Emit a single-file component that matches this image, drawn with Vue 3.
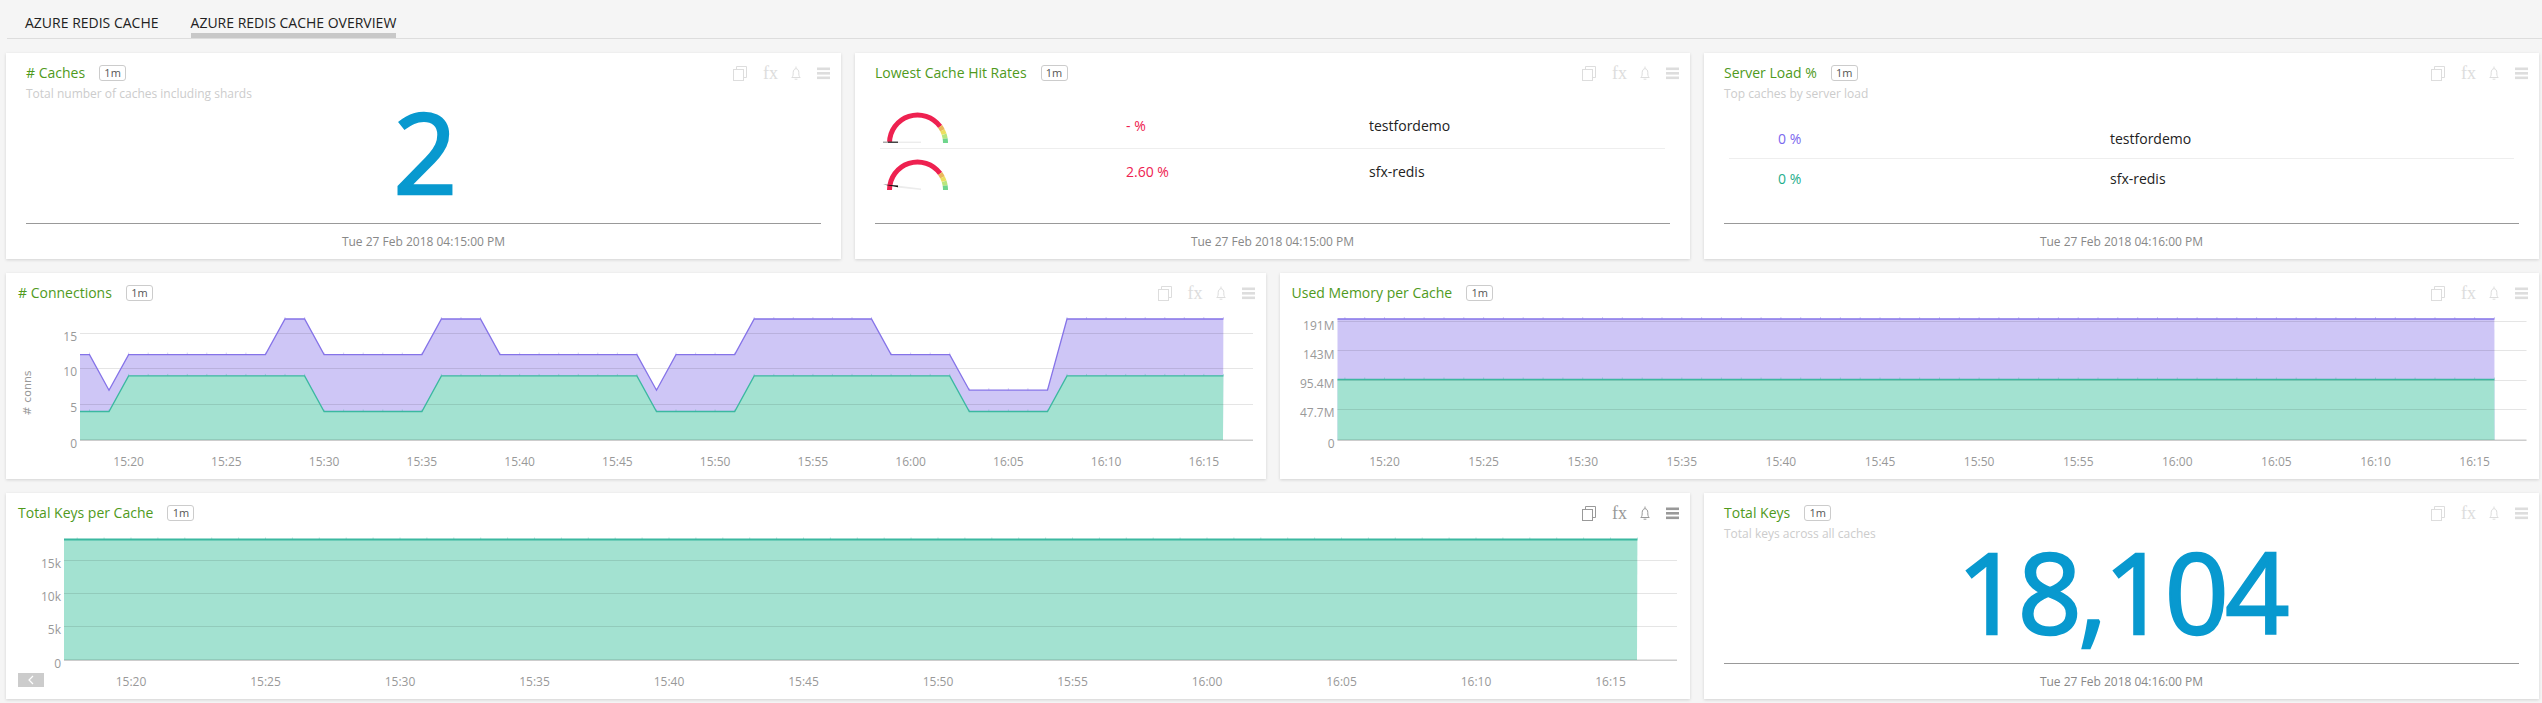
<template>
  <div class="page">
    <div class="tabs">
      <span class="tab">AZURE REDIS CACHE</span>
      <span class="tab active">AZURE REDIS CACHE OVERVIEW</span>
    </div>

    <div class="grid">
      <section v-for="card in cards" :key="card.title" :class="['card', card.cls]">
        <header class="head">
          <span class="title">{{ card.title }}</span>
          <span class="badge">1m</span>
          <div class="tools">
            <svg width="14" height="15" viewBox="0 0 14 15" fill="none" stroke="currentColor">
              <rect x="0.5" y="3.5" width="10" height="11" />
              <path d="M3.5 3V.5h10v11H11" />
            </svg>
            <span class="fx">fx</span>
            <svg width="10" height="15" viewBox="0 0 10 15" fill="none" stroke="currentColor">
              <path d="M.8 11.5c1.4-1.2 1.4-3 1.4-5 0-2.200 1.200-3.800 2.800-3.800s2.800 1.600 2.800 3.800c0 2 0 3.800 1.400 5z" />
              <path d="M5 .5v2M3.600 13.200h2.800" />
            </svg>
            <svg width="13" height="13" viewBox="0 0 13 13" fill="currentColor">
              <rect y="0.500" width="13" height="2.600" />
              <rect y="5" width="13" height="2.600" />
              <rect y="9.500" width="13" height="2.600" />
            </svg>
          </div>
        </header>
        <p v-if="card.sub" class="sub">{{ card.sub }}</p>

        <div v-if="card.type === 'stat'" class="stat">{{ card.value }}</div>

        <div v-if="card.type === 'gauges'" class="rows gauges">
          <div v-for="row in gaugeRows" :key="row.name" class="row">
            <svg class="gauge" width="66" height="36" viewBox="0 0 66 36" fill="none">
              <path v-for="seg in arcSegments" :key="seg.color" :d="seg.d" :stroke="seg.color" stroke-width="5" />
              <template v-if="row.flat">
                <rect x="15" y="34.600" width="23" height="1.400" fill="#ececec" />
                <rect x="0" y="34.500" width="5" height="1.800" fill="#aaa" />
                <rect x="5" y="34.500" width="10" height="1.800" fill="#444" />
              </template>
              <template v-else>
                <polygon points="14,31.500 38,34.500 38,36 14,33.500" fill="#ececec" />
                <polygon points="0,30.500 15,31.500 15,33.200" fill="#111" />
              </template>
            </svg>
            <span class="val red">{{ row.value }}</span>
            <span class="name">{{ row.name }}</span>
          </div>
        </div>

        <div v-if="card.type === 'load'" class="rows load">
          <div v-for="row in loadRows" :key="row.name" class="row">
            <span class="val" :style="{ color: row.color }">{{ row.value }}</span>
            <span class="name">{{ row.name }}</span>
          </div>
        </div>

        <div v-if="card.foot" class="foot">{{ card.foot }}</div>

        <svg v-if="card.chart" class="chart" height="166">
          <path
            v-for="s in card.chart.series"
            :key="s.fill"
            :d="s.area"
            :fill="s.fill"
          />
          <line
            v-for="g in card.chart.grid"
            :key="g.y"
            :x1="card.chart.left"
            :x2="card.chart.gridEnd"
            :y1="g.y"
            :y2="g.y"
            stroke="#000"
            stroke-opacity="0.1"
          />
          <line :x1="card.chart.left" :x2="card.chart.gridEnd" y1="127" y2="127" stroke="#000" stroke-opacity="0.1" stroke-width="2" />
          <g v-for="s in card.chart.series" :key="s.stroke" fill="none" :stroke="s.stroke">
            <path :d="s.line" :stroke-width="card.chart.lineWidth" />
            <path :d="s.ticks" stroke-opacity="0.35" />
          </g>
          <text
            v-for="g in card.chart.grid"
            :key="g.label"
            class="tick"
            text-anchor="end"
            :x="card.chart.labelEnd"
            :y="g.y + g.dy"
          >{{ g.label }}</text>
          <text
            v-for="t in card.chart.times"
            :key="t.label"
            class="tick"
            text-anchor="middle"
            :x="t.x"
            y="152.500"
          >{{ t.label }}</text>
          <text v-if="card.chart.yTitle" class="ytitle" text-anchor="middle" transform="translate(25 80) rotate(-90)">{{ card.chart.yTitle }}</text>
          <g v-if="card.chart.back">
            <rect x="12" y="140" width="26" height="14" fill="#ccc" />
            <path d="M27 143l-4 4 4 4" fill="none" stroke="#fff" stroke-width="1.200" />
          </g>
        </svg>
      </section>
    </div>
  </div>
</template>

<script setup>
const PURPLE = { fill: '#cec6f6', stroke: '#8573e8' }
const GREEN = { fill: '#a3e2d1', stroke: '#3bb8a0' }

// draws one chart out of [minute, value] breakpoints, minutes counted from 15:00
function buildChart(opts) {
  const x = (m) => opts.t20 + (m - 20) * opts.step
  const y = (v) => 127 - v * opts.unit
  const startMin = 20 + (opts.left - opts.t20) / opts.step
  const series = opts.series.map((s) => {
    const pts = s.points.map(([m, v]) => [m === 'start' ? startMin : m, v])
    const line = pts.map(([m, v], i) => `${i ? 'L' : 'M'}${x(m).toFixed(1)} ${y(v).toFixed(1)}`).join('')
    const area = `${line}L${opts.right} 127L${opts.left} 127Z`
    let ticks = ''
    for (let m = Math.ceil(startMin); m <= 76; m++) {
      const i = pts.findIndex((p) => p[0] >= m)
      if (i < 1) continue
      const [m0, v0] = pts[i - 1]
      const [m1, v1] = pts[i]
      const v = v0 + ((v1 - v0) * (m - m0)) / (m1 - m0)
      ticks += `M${x(m).toFixed(1)} ${(y(v) - 2).toFixed(1)}v2`
    }
    return { ...s.color, line, area, ticks }
  })
  const times = []
  for (let m = 20; m <= 75; m += 5) {
    const label = `${m >= 60 ? 16 : 15}:${String(m % 60).padStart(2, '0')}`
    times.push({ label, x: x(m) })
  }
  return { ...opts, series, times }
}

const connChart = buildChart({
  left: 74,
  right: 1217,
  gridEnd: 1247,
  labelEnd: 71,
  t20: 122.6,
  step: 19.55,
  unit: 7.12,
  lineWidth: 1.3,
  yTitle: '# conns',
  grid: [
    { y: 20.5, label: '15', dy: 7 },
    { y: 55.5, label: '10', dy: 7 },
    { y: 91.5, label: '5', dy: 7 },
    { y: 127.5, label: '0', dy: 7 }
  ],
  series: [
    {
      color: PURPLE,
      points: [['start', 12], [18, 12], [19, 7], [20, 12], [27, 12], [28, 17], [29, 17], [30, 12], [35, 12], [36, 17], [38, 17], [39, 12], [46, 12], [47, 7], [48, 12], [51, 12], [52, 17], [58, 17], [59, 12], [62, 12], [63, 7], [67, 7], [68, 17], [76, 17]]
    },
    {
      color: GREEN,
      points: [['start', 4], [19, 4], [20, 9], [29, 9], [30, 4], [35, 4], [36, 9], [46, 9], [47, 4], [51, 4], [52, 9], [62, 9], [63, 4], [67, 4], [68, 9], [76, 9]]
    }
  ]
})

const memChart = buildChart({
  left: 57.5,
  right: 1214.5,
  gridEnd: 1246.5,
  labelEnd: 54.5,
  t20: 104.5,
  step: 19.82,
  unit: 1,
  lineWidth: 1.6,
  grid: [
    { y: 8.5, label: '191M', dy: 8 },
    { y: 37.5, label: '143M', dy: 8 },
    { y: 67.5, label: '95.4M', dy: 7 },
    { y: 96.5, label: '47.7M', dy: 7 },
    { y: 127.5, label: '0', dy: 7 }
  ],
  series: [
    { color: PURPLE, points: [['start', 121], [76, 121]] },
    { color: GREEN, points: [['start', 60.5], [76, 60.5]] }
  ]
})

const keysChart = buildChart({
  left: 58,
  right: 1631,
  gridEnd: 1671,
  labelEnd: 55,
  t20: 125,
  step: 26.9,
  unit: 1,
  lineWidth: 2,
  back: true,
  grid: [
    { y: 27.5, label: '15k', dy: 7 },
    { y: 60.5, label: '10k', dy: 7 },
    { y: 93.5, label: '5k', dy: 7 },
    { y: 127.5, label: '0', dy: 7 }
  ],
  series: [{ color: GREEN, points: [['start', 120.5], [76, 120.5]] }]
})

const cards = [
  { title: '# Caches', sub: 'Total number of caches including shards', type: 'stat', value: '2', foot: 'Tue 27 Feb 2018 04:15:00 PM', cls: 'span2' },
  { title: 'Lowest Cache Hit Rates', type: 'gauges', foot: 'Tue 27 Feb 2018 04:15:00 PM', cls: 'span2' },
  { title: 'Server Load %', sub: 'Top caches by server load', type: 'load', foot: 'Tue 27 Feb 2018 04:16:00 PM', cls: 'span2' },
  { title: '# Connections', chart: connChart, cls: 'span3 tight' },
  { title: 'Used Memory per Cache', chart: memChart, cls: 'span3 tight' },
  { title: 'Total Keys per Cache', chart: keysChart, cls: 'span4 tight hot' },
  { title: 'Total Keys', sub: 'Total keys across all caches', type: 'stat', value: '18,104', foot: 'Tue 27 Feb 2018 04:16:00 PM', cls: 'span2' }
]

const gaugeRows = [
  { value: '- %', name: 'testfordemo', flat: true },
  { value: '2.60 %', name: 'sfx-redis', flat: false }
]

const loadRows = [
  { value: '0 %', name: 'testfordemo', color: '#7b68ee' },
  { value: '0 %', name: 'sfx-redis', color: '#1fae8c' }
]

// gauge arc: degrees measured from the right end of the half circle
function arc(from, to) {
  const pt = (deg) => {
    const rad = (deg * Math.PI) / 180
    return `${(34.5 + 28 * Math.cos(rad)).toFixed(2)} ${(36 - 28 * Math.sin(rad)).toFixed(2)}`
  }
  return `M${pt(from)}A28 28 0 0 1 ${pt(to)}`
}

const arcSegments = [
  { color: '#ee2150', d: arc(180, 36) },
  { color: '#eab85c', d: arc(36, 27) },
  { color: '#ecdf60', d: arc(27, 18) },
  { color: '#b8e67e', d: arc(18, 9) },
  { color: '#6ed58c', d: arc(9, 0) }
]
</script>

<style>
html,
body {
  margin: 0;
  background: #f5f5f5;
}
</style>

<style scoped>
.page {
  width: 2542px;
  height: 703px;
  overflow: hidden;
  background: #f5f5f5;
  font-family: "Open Sans", "Liberation Sans", sans-serif;
  color: #222;
}
.tabs {
  display: flex;
  gap: 32px;
  height: 38px;
  margin-left: 7px;
  padding-left: 18px;
  border-bottom: 1px solid #ddd;
}
.tab {
  height: 33px;
  padding-top: 14px;
  box-sizing: border-box;
  font-size: 14px;
  line-height: 18px;
}
.tab.active {
  height: 38px;
  border-bottom: 5px solid #c8c8c8;
}
.grid {
  display: grid;
  grid-template-columns: repeat(6, 1fr);
  grid-auto-rows: 206px;
  gap: 14px;
  padding: 14px 3px 0 6px;
}
.card {
  display: flex;
  flex-direction: column;
  min-width: 0;
  background: #fff;
  box-shadow: 0 1px 3px rgba(0, 0, 0, 0.14);
  --pad: 20px;
}
.span2 { grid-column: span 2; }
.span3 { grid-column: span 3; }
.span4 { grid-column: span 4; }
.tight { --pad: 12px; }
.head {
  display: flex;
  align-items: center;
  height: 16px;
  padding: 12px 11px 0 var(--pad);
}
.title {
  font-size: 14px;
  line-height: 16px;
  color: #4f9a1c;
}
.badge {
  width: 27px;
  height: 16px;
  margin-left: 14px;
  box-sizing: border-box;
  border: 1px solid #ccc;
  border-radius: 3px;
  font-size: 11px;
  line-height: 14px;
  text-align: center;
  color: #555;
}
.tools {
  display: flex;
  align-items: center;
  gap: 16px;
  margin-left: auto;
  color: #ddd;
}
.hot .tools {
  color: #999;
}
.fx {
  width: 12px;
  font-family: "Liberation Serif", serif;
  font-size: 18px;
  line-height: 16px;
}
.sub {
  margin: 5px 0 0;
  padding-left: var(--pad);
  font-size: 12px;
  line-height: 16px;
  color: #ccc;
}
.stat {
  flex: 1;
  font-size: 112px;
  line-height: 97px;
  letter-spacing: -0.03em;
  -webkit-text-stroke: 2.5px #0899cf;
  text-align: center;
  color: #0899cf;
}
.rows {
  flex: 1;
  margin: 0 25px;
}
.row {
  display: grid;
  align-items: center;
  box-sizing: border-box;
  font-size: 14px;
  line-height: 18px;
  border-bottom: 1px solid #eee;
}
.row:last-child {
  border-bottom: 0;
}
.gauges {
  margin-top: 22px;
}
.gauges .row {
  grid-template-columns: 246px 243px 1fr;
  height: 46px;
}
.gauge {
  align-self: end;
  margin: 0 0 5px 3px;
}
.load {
  margin-top: 17px;
}
.load .row {
  grid-template-columns: 381px 1fr;
  height: 40px;
}
.load .val {
  padding-left: 49px;
}
.val {
  font-size: 14px;
}
.red {
  color: #ee2150;
}
.name {
  color: #222;
}
.foot {
  height: 35px;
  margin: 0 20px;
  border-top: 1px solid #999;
  font-size: 12px;
  line-height: 35px;
  text-align: center;
  color: #888;
}
.chart {
  display: block;
  width: 100%;
  margin-top: 12px;
  overflow: hidden;
}
.tick {
  font-family: "Open Sans", "Liberation Sans", sans-serif;
  font-size: 12px;
  fill: #999;
}
.ytitle {
  font-family: "DejaVu Sans", sans-serif;
  font-size: 11px;
  fill: #999;
}
</style>
